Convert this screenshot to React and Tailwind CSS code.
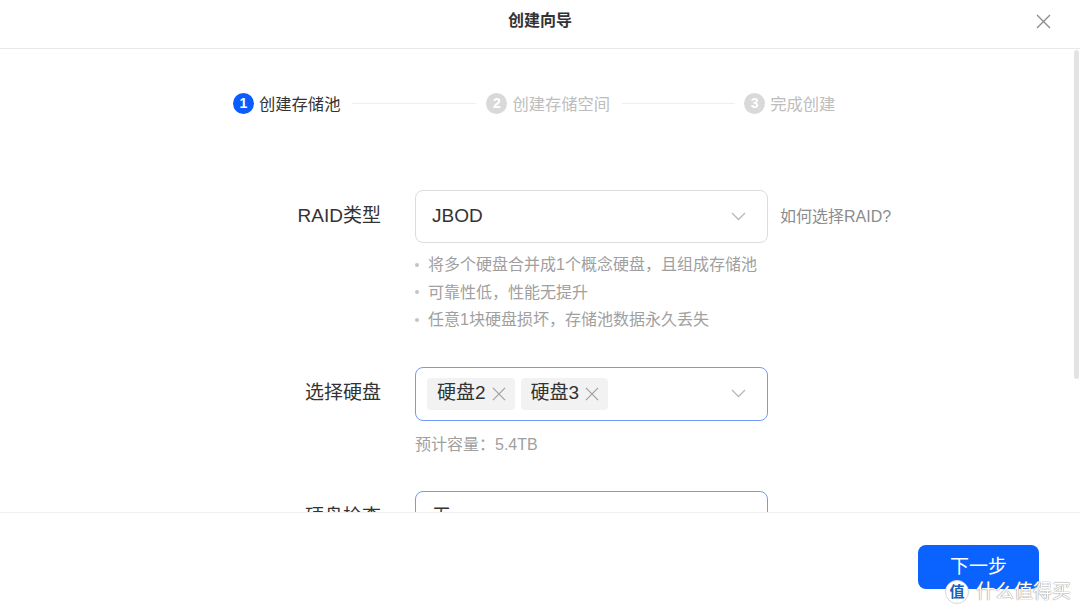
const font = { fontFamily: '"Liberation Sans", "Noto Sans CJK SC", sans-serif' };

function Cross({ className, size = 15 }) {
  return (
    <svg width={size} height={size} viewBox="0 0 15 15" className={className} fill="none" stroke="currentColor" strokeWidth="1.3">
      <path d="M1 1 L14 14 M14 1 L1 14" />
    </svg>
  );
}

function Chevron() {
  return (
    <svg width="15" height="9" viewBox="0 0 15 9" fill="none" stroke="#b8b8b8" strokeWidth="1.3">
      <path d="M1 1 L7.5 7.5 L14 1" />
    </svg>
  );
}

function Step({ n, label, active }) {
  return (
    <div className="flex items-center">
      <span
        className={
          "flex h-[21px] w-[21px] items-center justify-center rounded-full text-[14px] font-bold text-white " +
          (active ? "bg-[#0b5cff]" : "bg-[#d9d9d9]")
        }
      >
        {n}
      </span>
      <span className={"ml-[5px] text-[16.3px] leading-5 " + (active ? "text-[#333]" : "text-[#bdbdbd]")}>
        {label}
      </span>
    </div>
  );
}

function Tag({ text }) {
  return (
    <span className="flex h-8 items-center rounded-[4px] bg-[#f2f2f2] pl-[10px] pr-[9px] text-[19px] text-[#333]">
      {text}
      <Cross className="ml-[6px] text-[#a0a0a0]" size={14} />
    </span>
  );
}

function Row({ label, h, children, after }) {
  return (
    <div className="flex items-start">
      <div className="flex w-[381px] items-center justify-end text-[19px] text-[#333]" style={{ height: h }}>
        {label}
      </div>
      <div className="ml-[34px] w-[353px]">{children}</div>
      {after}
    </div>
  );
}

export default function App() {
  return (
    <div className="flex h-[615px] w-[1080px] flex-col overflow-hidden bg-white" style={font}>
      <header className="relative flex h-[49px] shrink-0 items-center justify-center border-b border-[#e8e8e8]">
        <span className="-mt-[6px] text-[16px] font-bold text-[#333]">创建向导</span>
        <Cross className="absolute right-[29px] top-[14px] text-[#8a8a8a]" size={15} />
      </header>

      <div className="relative flex-1 overflow-hidden">
        <div className="absolute right-[1px] top-[1px] h-[329px] w-[5px] rounded-[3px] bg-[#e3e3e3]" />

        <div className="flex items-center pl-[233px] pt-[44px]">
          <Step n="1" label="创建存储池" active />
          <div className="ml-[12px] mr-[10px] h-px w-[124px] bg-[#eeeeee]" />
          <Step n="2" label="创建存储空间" />
          <div className="ml-[12px] mr-[9px] h-px w-[113px] bg-[#eeeeee]" />
          <Step n="3" label="完成创建" />
        </div>

        <div className="mt-[76px]">
          <Row
            label="RAID类型"
            h={53}
            after={<span className="ml-[12px] flex h-[53px] items-center text-[16px] text-[#8c8c8c]">如何选择RAID?</span>}
          >
            <div className="flex h-[53px] items-center justify-between rounded-[8px] border border-[#dcdcdc] pl-[16px] pr-[21px] text-[19px] text-[#333]">
              JBOD
              <Chevron />
            </div>
            <ul className="mt-[8px] text-[16px] leading-[27.5px] text-[#a0a0a0]">
              {["将多个硬盘合并成1个概念硬盘，且组成存储池", "可靠性低，性能无提升", "任意1块硬盘损坏，存储池数据永久丢失"].map((t) => (
                <li key={t} className="flex items-center">
                  <span className="mr-[9px] h-[4px] w-[4px] rounded-full bg-[#c4c4c4]" />
                  {t}
                </li>
              ))}
            </ul>
          </Row>

          <div className="mt-[33px]">
            <Row label="选择硬盘" h={54}>
              <div className="flex h-[54px] items-center justify-between rounded-[8px] border border-[#6e9cf7] pl-[11px] pr-[21px]">
                <div className="flex gap-[6px]">
                  <Tag text="硬盘2" />
                  <Tag text="硬盘3" />
                </div>
                <Chevron />
              </div>
              <div className="mt-[12px] text-[16px] leading-6 text-[#a0a0a0]">预计容量：5.4TB</div>
            </Row>
          </div>

          <div className="mt-[34px]">
            <Row label="硬盘检查" h={54}>
              <div className="flex h-[54px] items-center rounded-[8px] border border-[#6e9cf7] pl-[16px] text-[19px] text-[#333]">
                无
              </div>
            </Row>
          </div>
        </div>
      </div>

      <footer className="relative flex h-[103px] shrink-0 justify-end border-t border-[#efefef] pr-[41px] pt-[32px]">
        <button className="h-[44px] w-[121px] rounded-[8px] bg-[#0a62ff] text-[19px] text-white">下一步</button>
        <div className="absolute bottom-[9px] right-[9px] flex items-center">
          <span className="flex h-[24px] w-[24px] items-center justify-center rounded-full border border-[#d8d8d8] bg-white text-[15px] font-bold text-[#1a5fb8]">
            值
          </span>
          <span
            className="ml-[7px] text-[19px] text-white"
            style={{ textShadow: "0 0 1px #888, 0 0 1px #888" }}
          >
            什么值得买
          </span>
        </div>
      </footer>
    </div>
  );
}
